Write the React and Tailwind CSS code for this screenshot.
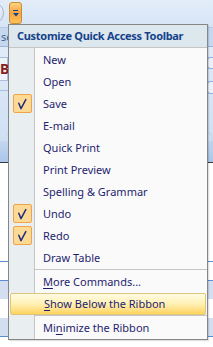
import React from "react";

const Check = () => (
  <svg width="19" height="19" viewBox="0 0 19 19" className="block">
    <path d="M5.8 9.2 L8 14.6 L12.8 5.6" stroke="#1f2c7c" strokeWidth="1.5" fill="none" strokeLinejoin="round" strokeLinecap="round" />
  </svg>
);

const CheckBox = () => (
  <div className="ml-[4px] mt-[1px] w-[19px] h-[19px] rounded-[2px] border border-[#f2a347] bg-[#fdd996] flex items-center justify-center">
    <div className="-m-[1px]"><Check /></div>
  </div>
);

const Row = ({ checked, children }) => (
  <div className="flex h-[22px]">
    <div className="w-[25px] shrink-0 bg-[#e9eef0] border-r border-[#c5c5c5] box-content">
      {checked ? <CheckBox /> : null}
    </div>
    <div className="pl-[8px] flex items-center text-[#1e1e70]">{children}</div>
  </div>
);

const Sep = ({ h }) => (
  <div className={`flex ${h}`}>
    <div className="w-[25px] shrink-0 bg-[#e9eef0] border-r border-[#c5c5c5] box-content" />
    <div className="flex-1">
      <div className="h-[1px] bg-[#c5c5c5]" />
    </div>
  </div>
);

export default function App() {
  return (
    <div
      className="relative w-[213px] h-[347px] overflow-hidden bg-white"
      style={{ fontFamily: '"Noto Sans", "Open Sans", sans-serif' }}
    >
      {/* Quick access bar */}
      <div className="h-[28px] bg-gradient-to-b from-[#e3edf9] to-[#d6e4f5] flex items-start pt-[2px] border-b border-[#b7cbe6]">
        <div className="-ml-[18px] w-[22px] h-[22px] rounded-full border border-[#9fb5d2] bg-gradient-to-b from-[#f3f6fb] to-[#d3deec]" />
        <div className="ml-[5px] w-[13px] h-[22px] rounded-[3px] border border-[#c98c36] bg-gradient-to-b from-[#fcd27f] via-[#f8a33c] to-[#fbc25a] flex flex-col items-center pt-[7px]">
          <div className="w-[5px] h-[1px] bg-[#15428b]" />
          <svg width="6" height="4" viewBox="0 0 6 4" className="mt-[2px] block">
            <path d="M0 0 H6 L3 3.5 Z" fill="#15428b" />
          </svg>
        </div>
      </div>
      {/* Tab row */}
      <div className="h-[19px] bg-[#c5d8ef] flex items-center text-[11px] text-[#3b5f96] pl-[1px] border-b border-[#9ab6dc]">
        se
      </div>
      {/* Ribbon body */}
      <div className="h-[94px] bg-gradient-to-b from-[#e1ebf8] to-[#cfdff3] flex justify-between pt-[10px]">
        <div className="flex flex-col">
          <div className="w-[9px] h-[24px] border border-[#a9bfdc] border-l-0 bg-[#eef3fa] text-[14px] font-bold text-[#8a1c24] leading-[22px] -ml-[1px] pl-[1px]">B</div>
          <div className="mt-[9px] w-[9px] h-[1px] bg-[#a9bfdc]" />
        </div>
        <div className="flex flex-col gap-[12px]">
          <div className="w-[6px] h-[12px] rounded-l-[3px] border border-r-0 border-[#8fb1df] bg-[#eaf1fb]" />
          <div className="w-[6px] h-[13px] rounded-l-[3px] border border-r-0 border-[#8fb1df] bg-[#eaf1fb]" />
        </div>
      </div>
      {/* group label band */}
      <div className="h-[21px] bg-gradient-to-b from-[#c4d7ef] to-[#aac6ea]" />
      <div className="h-[1px] bg-[#3a3a3a]" />
      {/* document */}
      <div className="h-[98px] bg-white" />
      <div className="h-[1px] bg-[#5b8fd1]" />
      <div className="h-[18px] bg-white" />
      <div className="h-[1px] bg-[#5b8fd1]" />
      <div className="h-[18px] bg-[#d3dff1]" />
      <div className="h-[19px] bg-white" />
      <div className="h-[18px] bg-[#d3dff1]" />
      <div className="h-[1px] bg-[#5b8fd1]" />

      {/* watermark */}
      <div className="absolute left-[6px] top-[124px] text-[28px] leading-none text-black/[0.03] whitespace-nowrap" style={{ fontFamily: '"Liberation Sans", sans-serif' }}>
        www.java2s.com
      </div>

      {/* Dropdown menu */}
      <div className="absolute left-[8px] top-[24px] w-[200px] border border-[#868686] bg-[#fafafa] text-[11px] shadow-[1px_1px_1px_rgba(0,0,0,0.12)]">
        <div className="h-[22px] bg-[#dde7ee] border-b border-[#c5c5c5] flex items-center pl-[8px] font-bold tracking-[-0.3px] text-[#15428b] box-content">
          Customize Quick Access Toolbar
        </div>
        <div>
          <div className="flex h-[1px]">
            <div className="w-[25px] bg-[#e9eef0] border-r border-[#c5c5c5] box-content" />
          </div>
          <Row>New</Row>
          <Row>Open</Row>
          <Row checked>Save</Row>
          <Row>E-mail</Row>
          <Row>Quick Print</Row>
          <Row>Print Preview</Row>
          <Row>Spelling &amp; Grammar</Row>
          <Row checked>Undo</Row>
          <Row checked>Redo</Row>
          <Row>Draw Table</Row>
          <Sep h="h-[2px]" />
          <Row>
            <span><span className="underline underline-offset-2">M</span>ore Commands...</span>
          </Row>
          <div className="h-[22px] mx-[1px] rounded-[2px] border border-[#dcc67c] bg-gradient-to-b from-[#fffbe3] via-[#fff0b3] to-[#ffd35a] flex items-center pl-[33px] text-[#1e1e70]">
            <span><span className="underline underline-offset-2">S</span>how Below the Ribbon</span>
          </div>
          <Sep h="h-[2px]" />
          <Row>
            <span>Mi<span className="underline underline-offset-2">n</span>imize the Ribbon</span>
          </Row>
        </div>
      </div>
    </div>
  );
}
